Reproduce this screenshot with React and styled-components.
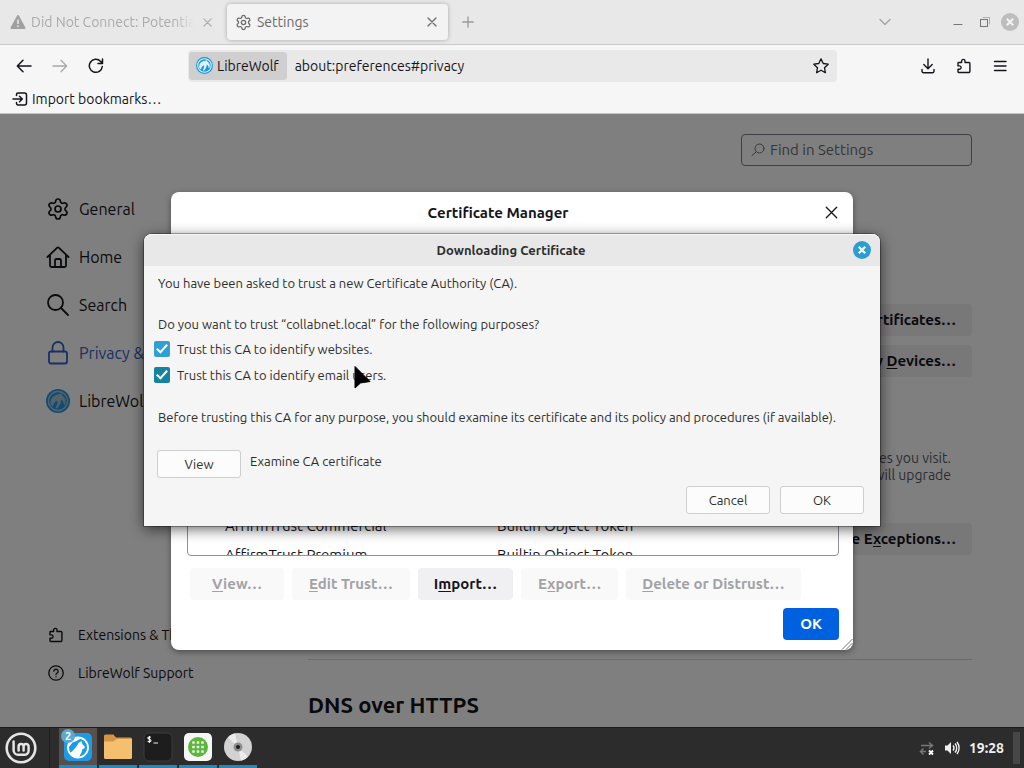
import React from 'react';
import styled, { createGlobalStyle } from 'styled-components';
import { Settings } from 'lucide-react';

const GlobalStyle = createGlobalStyle`
  *, *::before, *::after { box-sizing: border-box; }
  body {
    margin: 0;
    background: #808080;
    font-family: Ubuntu, "Open Sans", "Noto Sans", sans-serif;
    font-size: 14px;
    line-height: 18px;
    color: #15141a;
  }
  button, input { font: inherit; color: inherit; margin: 0; }
  button { border: 0; background: none; padding: 0; }
  p, h1, h2 { margin: 0; }
  svg { display: block; flex: none; }
  u { text-underline-offset: 2px; }
`;

/* ---------- desktop and browser chrome ---------- */

const Desktop = styled.div`
  position: relative;
  display: flex;
  flex-direction: column;
  min-height: 100vh;
  overflow: hidden;
`;

const Browser = styled.div`
  flex: 1;
  display: flex;
  flex-direction: column;
`;

const TabStrip = styled.div`
  display: flex;
  align-items: center;
  height: 45px;
  padding: 0 2px;
  background: #e8e8e8;
  border-bottom: 1px solid #c9c9c9;
  color: #9a9a9a;
`;

const Tab = styled.div`
  display: flex;
  align-items: center;
  gap: 5px;
  width: 221px;
  height: 36px;
  margin-right: 4px;
  padding: 0 8px;
  border-radius: 4px;
  color: ${(p) => (p.$active ? '#6a6a6a' : '#ababab')};
  background: ${(p) => (p.$active ? '#f3f3f3' : 'transparent')};
  box-shadow: ${(p) => (p.$active ? '0 0 4px rgba(0, 0, 0, 0.28)' : 'none')};
`;

const TabTitle = styled.span`
  flex: 1;
  min-width: 0;
  overflow: hidden;
  white-space: nowrap;
  -webkit-mask-image: ${(p) =>
    p.$faded ? 'linear-gradient(to right, #000 88%, transparent)' : 'none'};
`;

const IconButton = styled.button`
  display: grid;
  place-items: center;
  flex: none;
  width: ${(p) => p.$size || 32}px;
  height: ${(p) => p.$size || 32}px;
  color: ${(p) => (p.$dim ? '#a8a8a8' : 'inherit')};
`;

const WindowControls = styled.div`
  display: flex;
  align-items: center;
  gap: 2px;
  margin-left: auto;
  color: #777;
`;

const TabListButton = styled(IconButton)`
  margin-right: 43px;
  color: #a8a8a8;
`;

const Toolbar = styled.div`
  display: flex;
  align-items: center;
  gap: 4px;
  height: 41px;
  padding: 0 8px;
  background: #f6f6f6;
`;

const UrlBar = styled.div`
  flex: 1;
  display: flex;
  align-items: center;
  height: 32px;
  margin: 0 71px 0 72px;
  padding-left: 1px;
  border-radius: 4px;
  background: #e9e9e9;
`;

const Identity = styled.button`
  display: flex;
  align-items: center;
  gap: 4px;
  height: 28px;
  padding: 0 8px 0 7px;
  border-radius: 3px;
  background: #cfcfcf;
`;

const UrlInput = styled.input`
  flex: 1;
  min-width: 0;
  padding: 0 8px;
  border: 0;
  outline: 0;
  background: none;
`;

const BookmarksBar = styled.div`
  display: flex;
  align-items: center;
  height: 28px;
  padding: 0 12px 2px;
  background: #f6f6f6;
  border-bottom: 1px solid #c4c4c4;
`;

const Bookmark = styled.button`
  display: flex;
  align-items: center;
  gap: 4px;
`;

/* ---------- settings page ---------- */

const Page = styled.div`
  position: relative;
  flex: 1;
  display: flex;
  background: #fff;
`;

const Sidebar = styled.nav`
  display: flex;
  flex-direction: column;
  width: 308px;
  padding: 71px 0 35px 46px;
`;

const Category = styled.a`
  display: flex;
  align-items: center;
  gap: 9px;
  height: 48px;
  font-size: 16px;
  text-decoration: none;
  color: ${(p) => (p.$selected ? '#3060c8' : '#15141a')};
`;

const FooterLinks = styled.div`
  margin-top: auto;
`;

const FooterLink = styled.a`
  display: flex;
  align-items: center;
  gap: 14px;
  height: 38px;
  padding-left: 2px;
  color: #15141a;
  text-decoration: none;
`;

const Main = styled.main`
  flex: 1;
  display: flex;
  flex-direction: column;
  align-items: flex-end;
  margin-right: 52px;
  padding-top: 20px;
`;

const SearchField = styled.label`
  display: flex;
  align-items: center;
  gap: 4px;
  width: 231px;
  height: 32px;
  margin-bottom: 138px;
  padding: 0 8px;
  border: 1px solid #7f7f8b;
  border-radius: 4px;
  color: #6c6c74;

  input {
    flex: 1;
    min-width: 0;
    padding: 0;
    border: 0;
    outline: 0;
    background: none;
    font-size: 15px;
  }
  input::placeholder { color: #6c6c74; opacity: 1; }
`;

const PushButton = styled.button`
  height: 32px;
  min-width: ${(p) => p.$min || 0}px;
  padding: 0 ${(p) => (p.$snug ? 16 : 17)}px;
  border-radius: 4px;
  font-size: 15px;
  font-weight: 700;
  white-space: nowrap;
  background: ${(p) => (p.$primary ? '#0061e0' : '#f0f0f2')};
  color: ${(p) => (p.$primary ? '#fbfbfe' : '#15141a')};

  &:disabled {
    background: #f9f9fa;
    color: #a2a2a5;
  }
`;

const SettingButtons = styled.div`
  display: flex;
  flex-direction: column;
  align-items: flex-end;
  gap: 9px;
  margin-bottom: 73px;
`;

const Description = styled.p`
  margin-bottom: 39px;
  padding-right: 21px;
  line-height: 17px;
  text-align: right;
  color: #5b5b66;
`;

const Divider = styled.hr`
  align-self: stretch;
  height: 1px;
  margin: 104px 0 30px;
  border: 0;
  background: #d6d6da;
`;

const SectionTitle = styled.h2`
  align-self: stretch;
  font-size: 22px;
  line-height: 30px;
`;

/* ---------- certificate manager ---------- */

const Overlay = styled.div`
  position: absolute;
  inset: 0;
  display: flex;
  justify-content: center;
  align-items: flex-start;
  padding-top: 78px;
  background: rgba(0, 0, 0, 0.5);
`;

const ManagerDialog = styled.section`
  position: relative;
  display: flex;
  flex-direction: column;
  width: 682px;
  border-radius: 8px;
  background: #fff;
  box-shadow: 0 2px 6px rgba(0, 0, 0, 0.4);
`;

const ManagerHeader = styled.header`
  display: flex;
  align-items: center;
  height: 41px;
  padding-right: 6px;

  h1 {
    flex: 1;
    padding-left: 10px;
    text-align: center;
    font-size: 15px;
  }
`;

const ManagerBody = styled.div`
  padding: 15px 14px 10px 16px;
`;

const CertificateList = styled.div`
  height: 308px;
  padding-top: 1px;
  overflow: hidden;
  border: 1px solid #8f8f9d;
  border-radius: 4px;
  font-size: 15px;
`;

const CertificateTable = styled.table`
  width: 100%;
  border-collapse: collapse;
  table-layout: fixed;

  th, td {
    height: 29px;
    padding: 0 0 0 37px;
    text-align: left;
  }
  th { font-weight: 400; }
  th + th, td + td { padding-left: 0; }
  th:first-child { width: 309px; }
`;

const ManagerButtons = styled.div`
  display: flex;
  gap: 8px;
  margin: 12px 0 8px 3px;
`;

const ManagerFooter = styled.footer`
  display: flex;
  justify-content: flex-end;
`;

const Resizer = styled.svg`
  position: absolute;
  right: 0;
  bottom: 0;
`;

/* ---------- downloading certificate ---------- */

const DialogLayer = styled.div`
  position: absolute;
  inset: 0;
  display: flex;
  justify-content: center;
  align-items: flex-start;
  padding-top: 234px;
`;

const TrustDialog = styled.section`
  position: relative;
  width: 736px;
  border-radius: 8px 8px 0 0;
  background: #f5f5f5;
  color: #2e2e2e;
  font-size: 13px;
  box-shadow: 0 0 0 1px rgba(0, 0, 0, 0.3), 0 3px 14px rgba(0, 0, 0, 0.62);
`;

const TrustHeader = styled.header`
  display: flex;
  align-items: center;
  height: 32px;
  padding: 0 9px;
  border-radius: 8px 8px 0 0;
  background: #e8e8e8;
  box-shadow: inset 0 1px 0 #f8f8f8;

  h1 {
    flex: 1;
    padding-left: 16px;
    text-align: center;
    font-size: 13px;
    font-weight: 700;
  }
`;

const TrustForm = styled.form`
  padding: 8px 16px 12px 10px;
`;

const Message = styled.p`
  margin: 0 0 ${(p) => p.$after}px 4px;
  white-space: nowrap;
`;

const CheckList = styled.div`
  display: grid;
  gap: 8px;
  margin-bottom: 24px;
`;

const CheckRow = styled.label`
  display: flex;
  align-items: center;
  gap: 7px;
`;

const CheckBox = styled.input`
  appearance: none;
  display: grid;
  justify-items: center;
  width: 16px;
  height: 16px;
  border-radius: 2px;
  background: ${(p) => (p.$hovered ? '#15829f' : '#2f9fd4')};

  &:checked::after {
    content: '';
    width: 6px;
    height: 11px;
    margin-top: 1px;
    border: solid #fff;
    border-width: 0 2px 2px 0;
    transform: rotate(42deg);
  }
`;

const DialogButton = styled.button`
  width: 84px;
  height: 28px;
  border: 1px solid #cecece;
  border-radius: 3px;
  background: #fcfcfc;
`;

const ExamineRow = styled.div`
  display: flex;
  align-items: flex-start;
  gap: 9px;
  margin: 0 0 8px 3px;

  span { padding-top: 2px; }
`;

const Actions = styled.footer`
  display: flex;
  justify-content: flex-end;
  gap: 10px;
`;

const Pointer = styled.svg`
  position: absolute;
  left: 210px;
  top: 131px;
`;

/* ---------- taskbar ---------- */

const Taskbar = styled.footer`
  display: flex;
  align-items: stretch;
  height: 41px;
  padding: 0 4px;
  background: #2c2c2c;
  border-top: 1px solid #1e1e1e;
  color: #f0f0f0;
`;

const MenuButton = styled.button`
  display: grid;
  place-items: center;
  width: 46px;
  padding-right: 12px;
  border-right: 1px solid #202020;
`;

const Launchers = styled.div`
  display: flex;
  gap: 2px;
  margin-left: 9px;
`;

const Launcher = styled.button`
  position: relative;
  display: grid;
  place-items: center;
  width: 38px;
  border-bottom: 3px solid #2787b8;
  background: ${(p) => (p.$active ? '#57504d' : 'transparent')};
`;

const Badge = styled.span`
  position: absolute;
  left: 2px;
  top: 1px;
  width: 14px;
  height: 14px;
  border-radius: 7px;
  background: #5aa9cf;
  color: #fff;
  font-size: 11px;
  font-weight: 700;
  line-height: 14px;
  text-align: center;
`;

const Tray = styled.div`
  display: flex;
  align-items: center;
  gap: 9px;
  margin-left: auto;

  time { font-weight: 700; }
`;

const ShowDesktop = styled.button`
  width: 7px;
  height: 32px;
  background: #474747;
`;

/* ---------- drawings ---------- */

const Stroke = ({ size = 16, w = 1.3, box = 16, children }) => (
  <svg width={size} height={size} viewBox={`0 0 ${box} ${box}`} fill="none" stroke="currentColor"
    strokeWidth={w} strokeLinecap="round" strokeLinejoin="round">{children}</svg>
);

const Cross = ({ size = 10, w = 1.3 }) => (
  <Stroke size={size} box={10} w={w}><path d="M1 1l8 8M9 1l-8 8" /></Stroke>
);

const Puzzle = ({ size = 16 }) => (
  <Stroke size={size} w={1.4}>
    <path d="M2 5.2a.7.7 0 0 1 .7-.7H5.6V3.1a1.7 1.7 0 0 1 3.4 0v1.4h4a.9.9 0 0 1 .9.9v8.200a.9.9 0 0 1-.9.9H2.700a.7.7 0 0 1-.7-.7v-2.500h1.400a1.700 1.700 0 0 0 0-3.400H2z" />
  </Stroke>
);

const RoundClose = ({ color, cross }) => (
  <svg width="18" height="18" viewBox="0 0 18 18">
    <circle cx="9" cy="9" r="9" fill={color} />
    <path d="M5.8 5.8l6.4 6.4M12.2 5.8l-6.4 6.4" stroke={cross} strokeWidth="2.2" />
  </svg>
);

const WolfLogo = ({ size, ring = '#1a93e0', inner = '#d9f4ff' }) => (
  <svg width={size} height={size} viewBox="0 0 24 24">
    <circle cx="12" cy="12" r="12" fill={ring} />
    <circle cx="12" cy="12" r="9.6" fill="none" stroke={inner} strokeWidth="1.6" />
    <path fill={inner} d="M4.500 13c.3-3.500 2.800-6.300 6.200-7.200L15.500 4.500l.8 2.200c2 1.200 3.200 3.200 3.200 5.500 0 1.600-.5 2.900-1.300 4L17 12.500l-1.500-2-1.300 4.500-2.700 4.500-2-.3 2-5-.3-2.700-2.400 1.800-2.300 4.200C5 16.500 4.400 14.700 4.500 13z" />
  </svg>
);

const MintLogo = () => (
  <svg width="32" height="32" viewBox="0 0 32 32" fill="none" stroke="#e4e4e4" strokeLinecap="round">
    <circle cx="16" cy="16" r="14.3" strokeWidth="2.6" />
    <path strokeWidth="2.5" d="M8.6 9.4v8.800a4.600 4.600 0 0 0 4.600 4.600h6a4.400 4.400 0 0 0 4.400-4.400v-4a2.500 2.500 0 0 0-5 0v4.200M18.600 14.400a2.500 2.500 0 0 0-5 0v4.200" />
  </svg>
);

const WolfApp = () => (
  <svg width="30" height="30" viewBox="0 0 30 30">
    <rect x="1" y="1" width="28" height="28" rx="5" fill="#1c9be8" />
    <circle cx="15" cy="15.5" r="10" fill="none" stroke="#fff" strokeWidth="1.8" />
    <path fill="#fff" d="M5.500 12c1-3.500 4.500-6 8.500-6.200l4 .7-4.500 2.500-4 1.500-4 5zM18.500 9l.8 3 2.700 3-.8 1.500-1.700.5-1 3.500-2.500 4.500-4.500.3-3-1.800-1.500-2.500 3-2.500 3.500-4 2-3.500z" />
  </svg>
);

const FolderApp = () => (
  <svg width="30" height="30" viewBox="0 0 30 30">
    <path fill="#d3944a" d="M1 4a1.500 1.500 0 0 1 1.500-1.500h8L13 5.500h14.500A1.500 1.500 0 0 1 29 7v8H1z" />
    <path fill="#f5bf70" d="M1 9.500h9.500l3-2.500H29v18.500a1.500 1.500 0 0 1-1.500 1.500h-25A1.500 1.500 0 0 1 1 25.500z" />
  </svg>
);

const TerminalApp = () => (
  <svg width="30" height="30" viewBox="0 0 30 30">
    <rect x="1" y="1" width="28" height="28" rx="5" fill="#1d1d1d" stroke="#3d3d3d" />
    <path d="M7.800 5.500c-.8-.9-3-.8-3 .6 0 1.500 3.200.8 3.200 2.400 0 1.400-2.500 1.500-3.400.5M6.400 4v7M10.500 11h4.500" fill="none" stroke="#f2f2f2" strokeWidth="1.100" />
  </svg>
);

const GridApp = () => (
  <svg width="30" height="30" viewBox="0 0 30 30">
    <rect x="1" y="1" width="28" height="28" rx="5" fill="#f6f6f6" />
    <circle cx="15" cy="15" r="10" fill="#5cb53c" />
    {[10.5, 15, 19.5].map((y) => [10.5, 15, 19.5].map((x) => (
      <rect key={`${x}-${y}`} x={x - 1.3} y={y - 1.3} width="2.6" height="2.6" rx=".6" fill="#e8f6e0" />
    )))}
  </svg>
);

const DiscApp = () => (
  <svg width="30" height="30" viewBox="0 0 30 30">
    <circle cx="15" cy="15" r="14" fill="#d2d2d2" />
    <path d="M15 15L5 5.200A14 14 0 0 1 12 1.300zM15 15l10 9.800a14 14 0 0 1-7 3.900z" fill="#ececec" />
    <circle cx="15" cy="15" r="4.500" fill="#8d8d8d" />
    <circle cx="15" cy="15" r="2" fill="#1b1b1b" />
  </svg>
);

const CERTIFICATES = [
  ['AC Camerfirma S.A.', ''],
  ['Chambers of Commerce Root', 'Builtin Object Token'],
  ['Global Chambersign Root', 'Builtin Object Token'],
  ['ACCV', ''],
  ['ACCVRAIZ1', 'Builtin Object Token'],
  ['Actalis S.p.A.', ''],
  ['AffirmTrust', ''],
  ['AffirmTrust Networking', 'Builtin Object Token'],
  ['AffirmTrust Commercial', 'Builtin Object Token'],
  ['AffirmTrust Premium', 'Builtin Object Token'],
];

function BrowserChrome() {
  return (
    <>
      <TabStrip>
        <Tab>
          <svg width="16" height="16" viewBox="0 0 16 16">
            <path fill="#a0a0a0" d="M7.100 1.500a1 1 0 0 1 1.800 0l6.500 12a1 1 0 0 1-.9 1.500H1.500a1 1 0 0 1-.9-1.500z" />
            <path stroke="#e8e8e8" strokeWidth="1.600" d="M8 5.500v4.500M8 11.500v1.600" />
          </svg>
          <TabTitle $faded>Did Not Connect: Potential</TabTitle>
          <IconButton $size={16} aria-label="Close tab"><Cross size={9} /></IconButton>
        </Tab>
        <Tab $active>
          <Settings size={17} strokeWidth={1.8} />
          <TabTitle>Settings</TabTitle>
          <IconButton $size={16} aria-label="Close tab"><Cross /></IconButton>
        </Tab>
        <IconButton aria-label="New tab">
          <Stroke size={12} box={12} w={1.3}><path d="M6 .8v10.400M.8 6h10.400" /></Stroke>
        </IconButton>
        <WindowControls>
          <TabListButton aria-label="List all tabs">
            <Stroke size={12} box={12} w={1.5}><path d="M1 3.500l5 5 5-5" /></Stroke>
          </TabListButton>
          <IconButton $size={24} aria-label="Minimize">
            <Stroke size={10} box={10} w={1.2}><path d="M1 7.500h8" /></Stroke>
          </IconButton>
          <IconButton $size={24} aria-label="Restore">
            <svg width="11" height="11" viewBox="0 0 11 11" fill="none" stroke="#777">
              <rect x="1.500" y="2.500" width="7" height="7" />
              <path d="M3.500.5h7v7" strokeOpacity=".5" />
            </svg>
          </IconButton>
          <IconButton $size={24} aria-label="Close window"><RoundClose color="#bdbdbd" cross="#f2f2f2" /></IconButton>
        </WindowControls>
      </TabStrip>
      <Toolbar>
        <IconButton aria-label="Back">
          <Stroke w={1.5}><path d="M15 8H1.300M7 2.300L1.300 8 7 13.700" /></Stroke>
        </IconButton>
        <IconButton $dim aria-label="Forward">
          <Stroke w={1.3}><path d="M1 8h13.700M9 2.300L14.700 8 9 13.700" /></Stroke>
        </IconButton>
        <IconButton aria-label="Reload">
          <Stroke w={1.5}><path d="M14.300 8.500A6.500 6.500 0 1 1 12.600 3.400L14.500 5.300M14.500 1v4.500H10" /></Stroke>
        </IconButton>
        <UrlBar>
          <Identity><WolfLogo size={17} />LibreWolf</Identity>
          <UrlInput aria-label="Address" defaultValue="about:preferences#privacy" />
          <IconButton aria-label="Bookmark this page">
            <Stroke w={1.3}><path d="M8 .9l2.200 4.600 5 .7-3.700 3.500.9 5L8 12.300l-4.400 2.400.9-5L.8 6.200l5-.7z" /></Stroke>
          </IconButton>
        </UrlBar>
        <IconButton aria-label="Downloads">
          <Stroke w={1.4}><path d="M8 1v9.500M3.800 6.500L8 10.700l4.200-4.200M2 11.500v1.700a1.500 1.500 0 0 0 1.500 1.500h9a1.500 1.500 0 0 0 1.500-1.500v-1.700" /></Stroke>
        </IconButton>
        <IconButton aria-label="Extensions"><Puzzle /></IconButton>
        <IconButton aria-label="Menu">
          <Stroke w={1.4}><path d="M2.500 3.500h11.500M2.500 8h11.500M2.500 12.500h11.500" /></Stroke>
        </IconButton>
      </Toolbar>
      <BookmarksBar>
        <Bookmark>
          <Stroke w={1.5}><path d="M4.500 4.500V3.500a1.500 1.500 0 0 1 1.500-1.500h6.500a2 2 0 0 1 2 2v8a2 2 0 0 1-2 2H6a1.500 1.500 0 0 1-1.500-1.500v-1M1 8h9M7.500 5.300L10.300 8 7.500 10.700" /></Stroke>
          Import bookmarks…
        </Bookmark>
      </BookmarksBar>
    </>
  );
}

function CertificateManager() {
  return (
    <Overlay>
      <ManagerDialog role="dialog" aria-label="Certificate Manager">
        <ManagerHeader>
          <h1>Certificate Manager</h1>
          <IconButton aria-label="Close"><Cross size={13} w={1} /></IconButton>
        </ManagerHeader>
        <ManagerBody>
          <CertificateList>
            <CertificateTable>
              <thead><tr><th>Certificate Name</th><th>Security Device</th></tr></thead>
              <tbody>
                {CERTIFICATES.map(([name, device]) => (
                  <tr key={name}><td>{name}</td><td>{device}</td></tr>
                ))}
              </tbody>
            </CertificateTable>
          </CertificateList>
          <ManagerButtons>
            <PushButton disabled $min={94}><u>V</u>iew…</PushButton>
            <PushButton disabled><u>E</u>dit Trust…</PushButton>
            <PushButton $snug>I<u>m</u>port…</PushButton>
            <PushButton disabled>E<u>x</u>port…</PushButton>
            <PushButton disabled $snug><u>D</u>elete or Distrust…</PushButton>
          </ManagerButtons>
          <ManagerFooter><PushButton $primary>OK</PushButton></ManagerFooter>
        </ManagerBody>
        <Resizer width="12" height="12" viewBox="0 0 12 12">
          <path d="M1 11.500L11.500 1M5 11.500L11.500 5M9 11.500L11.500 9" stroke="#777" />
        </Resizer>
      </ManagerDialog>
    </Overlay>
  );
}

function SettingsPage() {
  return (
    <Page>
      <Sidebar>
        <Category href="#general"><Settings size={24} strokeWidth={1.7} />General</Category>
        <Category href="#home">
          <Stroke size={24} box={24} w={1.8}><path d="M1.500 12L11 2.800a1.500 1.500 0 0 1 2 0L22.500 12M4 10v10.500A1.500 1.500 0 0 0 5.500 22h13a1.500 1.500 0 0 0 1.500-1.500V10M9 22v-6.500A1.500 1.500 0 0 1 10.500 14h3a1.500 1.500 0 0 1 1.500 1.500V22" /></Stroke>
          Home
        </Category>
        <Category href="#search">
          <Stroke size={24} box={24} w={1.8}><circle cx="9.500" cy="9.500" r="7.500" /><path d="M15 15l7 7" /></Stroke>
          Search
        </Category>
        <Category href="#privacy" $selected>
          <Stroke size={24} box={24} w={1.8}><rect x="3" y="10.500" width="18" height="12" rx="2" /><path d="M6.500 10.500V6.500a5.500 5.500 0 0 1 11 0v4" /></Stroke>
          Privacy &amp; Security
        </Category>
        <Category href="#librewolf"><WolfLogo size={24} ring="#1e96e4" inner="#a4c4d8" />LibreWolf</Category>
        <FooterLinks>
          <FooterLink href="#extensions"><Puzzle />Extensions &amp; Themes</FooterLink>
          <FooterLink href="#support">
            <Stroke><circle cx="8" cy="8" r="7.200" /><path d="M5.900 6.200a2.100 2.100 0 1 1 3.200 1.800c-.7.400-1.100.8-1.100 1.500M8 11.700v.1" /></Stroke>
            LibreWolf Support
          </FooterLink>
        </FooterLinks>
      </Sidebar>
      <Main>
        <SearchField>
          <Stroke w={1}><circle cx="9.500" cy="6.500" r="4.500" /><path d="M6 10l-4 3.500" /></Stroke>
          <input type="search" placeholder="Find in Settings" aria-label="Find in Settings" />
        </SearchField>
        <SettingButtons>
          <PushButton $snug>View <u>C</u>ertificates…</PushButton>
          <PushButton $snug>Security <u>D</u>evices…</PushButton>
        </SettingButtons>
        <Description>sites you visit.<br />will upgrade</Description>
        <PushButton $snug>Manage E<u>x</u>ceptions…</PushButton>
        <Divider />
        <SectionTitle>DNS over HTTPS</SectionTitle>
      </Main>
      <CertificateManager />
    </Page>
  );
}

function DownloadingCertificate() {
  return (
    <DialogLayer>
      <TrustDialog role="dialog" aria-label="Downloading Certificate">
        <TrustHeader>
          <h1>Downloading Certificate</h1>
          <IconButton $size={18} aria-label="Close"><RoundClose color="#2d9dcf" cross="#f4fbff" /></IconButton>
        </TrustHeader>
        <TrustForm onSubmit={(e) => e.preventDefault()}>
          <Message $after={23}>You have been asked to trust a new Certificate Authority (CA).</Message>
          <Message $after={7}>Do you want to trust “collabnet.local” for the following purposes?</Message>
          <CheckList>
            <CheckRow><CheckBox type="checkbox" defaultChecked />Trust this CA to identify websites.</CheckRow>
            <CheckRow><CheckBox type="checkbox" defaultChecked $hovered />Trust this CA to identify email users.</CheckRow>
          </CheckList>
          <Message $after={24}>
            Before trusting this CA for any purpose, you should examine its certificate and its policy and procedures (if available).
          </Message>
          <ExamineRow>
            <DialogButton type="button">View</DialogButton>
            <span>Examine CA certificate</span>
          </ExamineRow>
          <Actions>
            <DialogButton type="button">Cancel</DialogButton>
            <DialogButton type="submit">OK</DialogButton>
          </Actions>
        </TrustForm>
        <Pointer width="18" height="26" viewBox="0 0 18 26">
          <path d="M1 1.500v21.500l5.500-5 9.500-1.500z" fill="#000" stroke="#000" strokeLinejoin="round" />
        </Pointer>
      </TrustDialog>
    </DialogLayer>
  );
}

export default function App() {
  return (
    <Desktop>
      <GlobalStyle />
      <Browser>
        <BrowserChrome />
        <SettingsPage />
      </Browser>
      <DownloadingCertificate />
      <Taskbar>
        <MenuButton aria-label="Menu"><MintLogo /></MenuButton>
        <Launchers>
          <Launcher $active aria-label="LibreWolf"><WolfApp /><Badge>2</Badge></Launcher>
          <Launcher aria-label="Files"><FolderApp /></Launcher>
          <Launcher aria-label="Terminal"><TerminalApp /></Launcher>
          <Launcher aria-label="Applications"><GridApp /></Launcher>
          <Launcher aria-label="Disc"><DiscApp /></Launcher>
        </Launchers>
        <Tray>
          <svg width="16" height="16" viewBox="0 0 16 16" fill="none">
            <path d="M2 5.500h11M10 2.500l3.500 3-3.500 3M7 11.500H2M4.500 8.500l-3 3 3 3" stroke="#777" strokeWidth="1.500" />
            <path d="M10 10.500l4 4M14 10.500l-4 4" stroke="#fff" strokeWidth="1.800" />
          </svg>
          <svg width="16" height="16" viewBox="0 0 16 16" fill="none" stroke="#f0f0f0" strokeWidth="1.500">
            <path d="M1 5.500h2.500L7 2v12l-3.500-3.500H1z" fill="#f0f0f0" stroke="none" />
            <path d="M9 5.500a4 4 0 0 1 0 5M11 3.500a7 7 0 0 1 0 9M13 2a10 10 0 0 1 0 12" />
          </svg>
          <time>19:28</time>
          <ShowDesktop aria-label="Show desktop" />
        </Tray>
      </Taskbar>
    </Desktop>
  );
}
